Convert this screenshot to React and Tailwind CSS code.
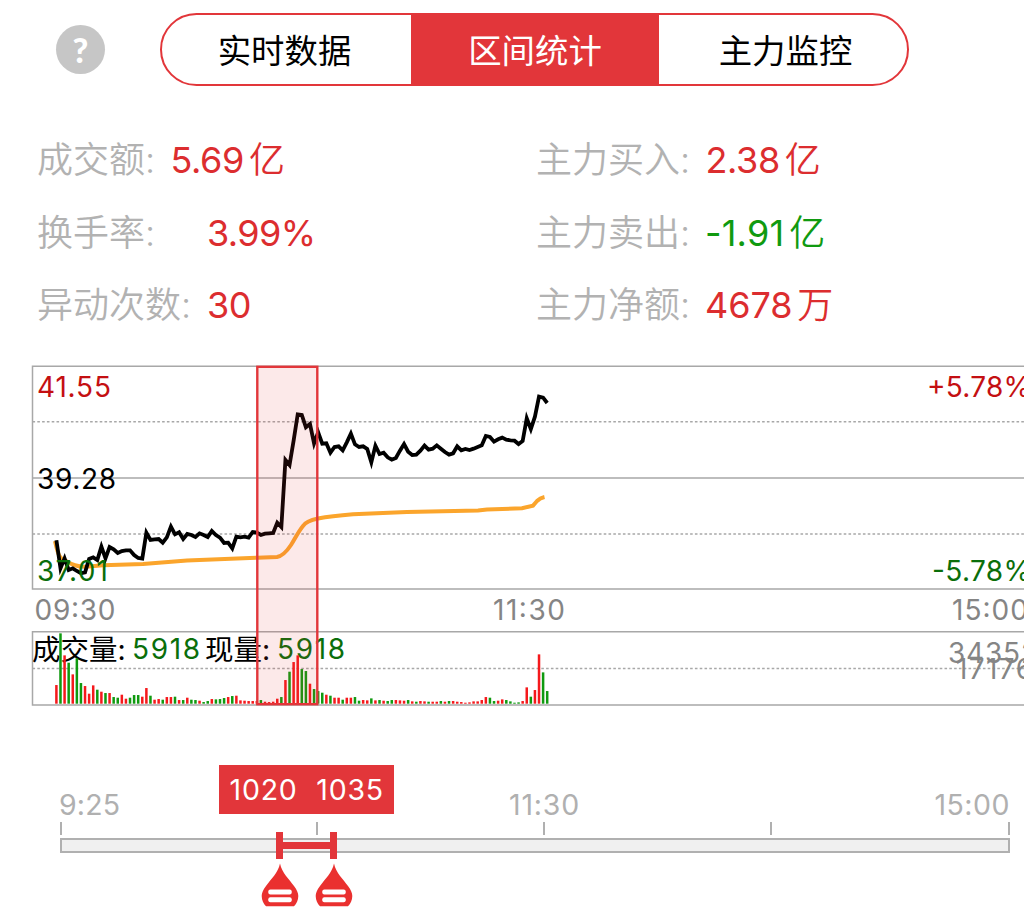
import React from 'react';

const TABS = [
    { name: '实时数据', pad: 'w-[249px] pr-[4px]' },
    { name: '区间统计', pad: 'w-[248px]' },
    { name: '主力监控', pad: 'w-[248px] pl-[5px]' },
];

const STATS = [
    { label: '成交额:', value: '5.69', unit: '亿', color: 'text-[#dc2d2f]', labelWidth: 'w-[133.5px]', tracking: 'tracking-[-0.4px]' },
    { label: '主力买入:', value: '2.38', unit: '亿', color: 'text-[#dc2d2f]', labelWidth: 'w-[169.5px]', tracking: 'tracking-[-0.4px]' },
    { label: '换手率:', value: '3.99%', unit: '', color: 'text-[#dc2d2f]', labelWidth: 'w-[170px]', tracking: 'tracking-[-0.6px]' },
    { label: '主力卖出:', value: '-1.91', unit: '亿', color: 'text-[#109a10]', labelWidth: 'w-[169px]', tracking: 'tracking-[0.2px]' },
    { label: '异动次数:', value: '30', unit: '', color: 'text-[#dc2d2f]', labelWidth: 'w-[170px]', tracking: 'tracking-[-0.6px]' },
    { label: '主力净额:', value: '4678', unit: '万', color: 'text-[#dc2d2f]', labelWidth: 'w-[169px]', tracking: 'tracking-[-0.1px]' },
];

// one sample per minute, 09:30 - 11:30, in thirds of a pixel
const PRICE = [
    556, 640, 610, 645, 640, 648, 655, 652, 612, 607, 615, 575, 610, 576, 583, 594, 588, 586, 586, 600,
    609, 611, 533, 555, 553, 552, 563, 547, 515, 538, 532, 552, 537, 540, 546, 535, 540, 546, 528, 540,
    548, 564, 563, 580, 545, 547, 545, 548, 531, 533, 540, 536, 535, 534, 503, 516, 315, 330, 257, 178,
    180, 217, 207, 265, 232, 266, 265, 293, 276, 274, 286, 262, 236, 268, 276, 274, 282, 322, 272, 297,
    293, 307, 314, 309, 287, 267, 290, 300, 299, 287, 272, 284, 281, 271, 281, 291, 299, 295, 274, 286,
    282, 285, 281, 276, 271, 243, 246, 260, 253, 248, 254, 256, 257, 267, 258, 190, 222, 185, 125, 128,
    144,
];

const VOLUME = [
    56, 211, 145, 123, 88, 136, 62, 53, 30, 55, 42, 36, 32, 32, 20, 18, 27, 15, 18, 26,
    26, 21, 47, 24, 12, 14, 12, 20, 20, 21, 11, 11, 18, 12, 11, 9, 5, 8, 14, 13,
    14, 17, 20, 23, 24, 10, 9, 8, 8, 8, 11, 6, 5, 6, 15, 20, 71, 96, 125, 145,
    104, 98, 60, 44, 38, 33, 27, 24, 18, 18, 12, 18, 18, 20, 9, 11, 10, 16, 10, 11,
    9, 8, 11, 11, 10, 9, 11, 7, 6, 8, 7, 6, 6, 6, 8, 6, 8, 8, 6, 5,
    3, 4, 7, 7, 11, 20, 18, 8, 9, 13, 11, 7, 3, 4, 8, 49, 21, 41, 148, 94,
    38,
];

// minutes drawn red, the rest are green
const VOLUME_UP = new Set([
    0, 2, 4, 7, 8, 9, 11, 13, 16, 17, 21, 22, 24, 25, 27, 28, 30, 32, 35, 38, 42, 44, 45, 46, 47, 48, 49,
    51, 52, 53, 54, 56, 58, 59, 62, 66, 68, 69, 71, 72, 75, 76, 78, 80, 83, 84, 85, 87, 89, 90, 92, 93,
    95, 97, 98, 99, 100, 101, 102, 103, 104, 105, 108, 109, 114, 115, 117, 118,
]);

const AVERAGE =
    'M55 541 C58 555 60 560 66 561 C72 565 77 567 86 566.7 L103 565.3 L143 564 L187 560.5 L257 557.7 L277 557 ' +
    'C283 556 287 551 291 545 C295 539 298 532 303 526 C306 521 313 519.5 318 518.5 C326 517 338 515.5 353 514.3 ' +
    'L407 512 L478 510.5 L487 509.6 L522 508.3 L533 505.6 L537 501 Q540 498 544.5 497';

const minuteX = (i) => 56.4 + i * 4.09;

const Tabs = ({ active }) => (
    <div className="flex w-[749px] h-[73px] rounded-full border-2 border-[#e2363a] overflow-hidden">
        {TABS.map((tab, i) => (
            <div
                key={tab.name}
                className={`flex shrink-0 items-center justify-center ${tab.pad} ${
                    i === active ? 'bg-[#e2363a] text-white' : 'text-black'
                }`}
            >
                <span className="pt-[4px] text-[33.4px] leading-none">{tab.name}</span>
            </div>
        ))}
    </div>
);

const Stat = ({ label, value, unit, color, labelWidth, tracking }) => (
    <div className="flex h-[72.6px] items-center text-[36px] leading-none whitespace-nowrap">
        <span className={`${labelWidth} shrink-0 font-[350] text-[#b2b2b2]`}>{label}</span>
        <span className={`${color} ${tracking}`}>{value}</span>
        {unit && <span className={`${color} ml-[5px] font-[350]`}>{unit}</span>}
    </div>
);

const Chart = () => (
    <svg className="block w-full h-[360px]" viewBox="0 355 1024 360" fontSize="28">
        <g fill="none" stroke="#a8a8a8" strokeWidth="1.5">
            <path d="M1030 366.2 H32.5 V589 H1030 M32.5 478 H1030" />
            <path d="M1030 631.7 H32.5 V705 H1030" />
            <path d="M32.5 421.8 H1030 M32.5 534 H1030 M32.5 668.5 H1030" strokeDasharray="2.6 2.2" />
        </g>

        <path d={AVERAGE} fill="none" stroke="#fba52c" strokeWidth="4" />
        <polyline
            points={PRICE.map((v, i) => `${minuteX(i)},${355 + v / 3}`).join(' ')}
            fill="none"
            stroke="#000"
            strokeWidth="3.8"
        />

        <text x="37" y="396.5" fill="#c40f12" textLength="74">41.55</text>
        <text x="37" y="489" fill="#000" textLength="79">39.28</text>
        <text x="37" y="581" fill="#0a6e0a" textLength="71">37.01</text>
        <text x="927" y="396.5" fill="#c40f12" textLength="104">+5.78%</text>
        <text x="932" y="581" fill="#0a6e0a" textLength="99">-5.78%</text>

        <g fill="#858585">
            <text x="34.5" y="619.5" textLength="81">09:30</text>
            <text x="493" y="619.5" textLength="72">11:30</text>
            <text x="952" y="619.5" textLength="76">15:00</text>
            <text x="948" y="662.5" textLength="90">34352</text>
            <text x="956" y="679" textLength="77">17176</text>
        </g>

        <text x="32" y="659.5" fontSize="28.5" fill="#000">成交量:</text>
        <text x="132" y="659" fill="#0a6e0a" textLength="68">5918</text>
        <text x="205" y="659.5" fontSize="28.5" fill="#000">现量:</text>
        <text x="277" y="659" fill="#0a6e0a" textLength="68">5918</text>

        {VOLUME.map((v, i) => (
            <rect
                key={i}
                x={minuteX(i) - 1.25}
                y={703.7 - v / 3}
                width="2.5"
                height={v / 3}
                fill={VOLUME_UP.has(i) ? '#f5191c' : '#109a10'}
            />
        ))}

        <rect x="257.3" y="366.8" width="60" height="337.4" fill="#e2363a" fillOpacity="0.11" stroke="#e2363a" strokeWidth="2.4" />
    </svg>
);

const Handle = ({ className }) => (
    <div className={`absolute top-[-8px] flex w-[38px] flex-col items-center ${className}`}>
        <div className="h-[27px] w-[7.5px] bg-[#e2363a]" />
        <svg className="mt-1 block" width="38" height="44" viewBox="0 0 38 44">
            <path
                d="M19 0.5 C21 10 28 16 33 23 C36 27 37.3 30 37.3 33 C37.3 37 35.5 41 33 43.3 H5 C2.5 41 0.7 37 0.7 33 C0.7 30 2 27 5 23 C10 16 17 10 19 0.5 Z"
                fill="#ea302f"
            />
            <rect x="7.3" y="26.5" width="23.4" height="5" rx="2" fill="#fff" />
            <rect x="7.3" y="34.3" width="23.4" height="5" rx="2" fill="#fff" />
        </svg>
    </div>
);

const RangeSlider = () => (
    <div className="relative ml-[60px] w-[950px] pt-[76px] text-[#b0b0b0]">
        <div className="flex h-[28px] items-center text-[28.5px] leading-none">
            <span className="ml-[-1px] w-[450px] tracking-[0.2px]">9:25</span>
            <span className="tracking-[0.8px]">11:30</span>
            <span className="ml-auto tracking-[0.5px]">15:00</span>
        </div>
        <div className="mt-[3px] flex h-[13px]">
            <div className="w-[255.5px] border-l-2 border-[#b0b0b0]" />
            <div className="w-[227.5px] border-l-2 border-[#b0b0b0]" />
            <div className="w-[227px] border-l-2 border-[#b0b0b0]" />
            <div className="flex-1 border-x-2 border-[#b0b0b0]" />
        </div>
        <div className="relative mt-[3px] h-[15px] border-2 border-[#b0b0b0] bg-[#f0f0f0]">
            <div className="absolute left-[217px] top-[2px] h-[7px] w-[54px] bg-[#e2363a]" />
            <Handle className="left-[198.5px]" />
            <Handle className="left-[252.5px]" />
        </div>
        <div className="absolute left-[159px] top-[50px] flex h-[49px] w-[175px] items-center justify-between bg-[#e2363a] pt-[2px] pr-[10px] pl-[10.5px] text-[28.5px] leading-none tracking-[0.8px] text-white">
            <span>1020</span>
            <span>1035</span>
        </div>
    </div>
);

export default function App() {
    return (
        <div className="w-[1024px] h-[907px] overflow-hidden bg-white font-['Inter','Noto_Sans_CJK_SC',sans-serif]">
            <div className="flex h-[124px] items-start pl-[56px] pt-[13px]">
                <div className="mt-[12px] mr-[55px] flex h-[49px] w-[49px] items-center justify-center rounded-full bg-[#c6c6c6] font-['Lato',sans-serif] text-[34px] font-black leading-none text-white">
                    ?
                </div>
                <Tabs active={1} />
            </div>

            <div className="grid grid-cols-[499px_1fr] content-start pl-[37px] h-[231px]">
                {STATS.map((stat) => (
                    <Stat key={stat.label} {...stat} />
                ))}
            </div>

            <Chart />
            <RangeSlider />
        </div>
    );
}
